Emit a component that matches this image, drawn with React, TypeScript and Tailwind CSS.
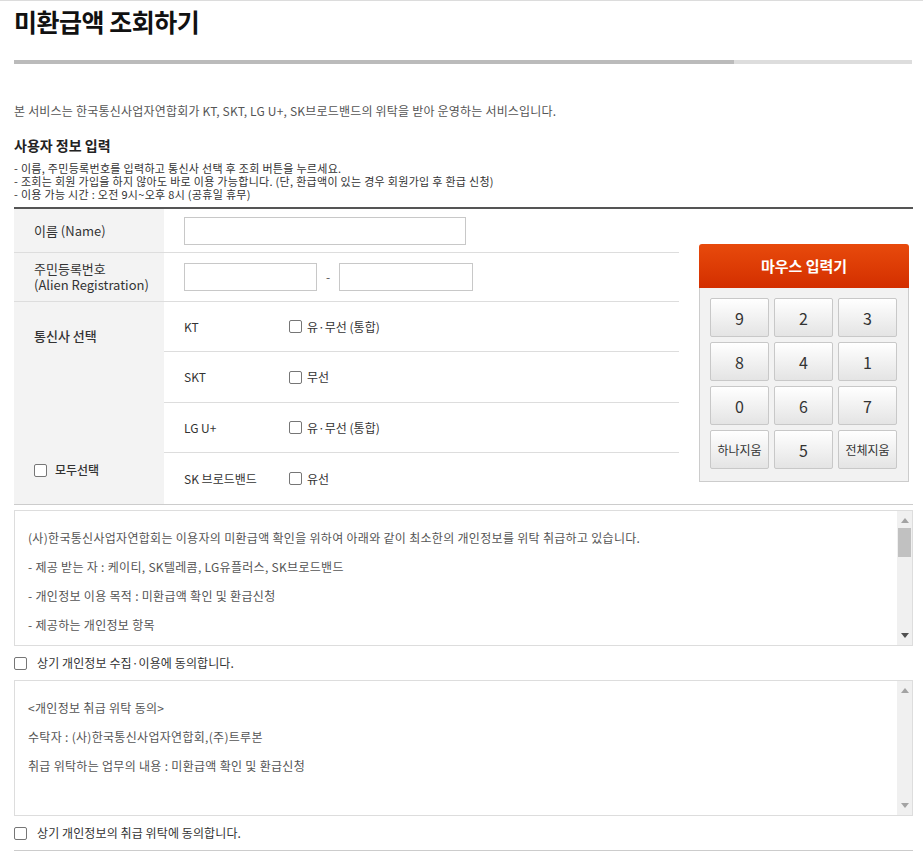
import React from "react";

const Check = ({ className = "" }: { className?: string }) => (
  <span
    className={`inline-block w-[13px] h-[13px] border border-[#767676] rounded-[2px] bg-white shrink-0 ${className}`}
  />
);

function ScrollBar({ active }: { active: boolean }) {
  return (
    <div className="w-[15px] bg-[#f0f0f0] flex flex-col items-center shrink-0">
      <svg width="8" height="5" viewBox="0 0 8 5" className="mt-[7px] shrink-0">
        <path d="M0 5 L4 0 L8 5Z" fill="#a3a3a3" />
      </svg>
      {active && <div className="mt-[5px] w-[13px] h-[29px] bg-[#c1c1c1] shrink-0" />}
      <div className="flex-1" />
      <svg width="8" height="5" viewBox="0 0 8 5" className="mb-[7px] shrink-0">
        <path d="M0 0 L8 0 L4 5Z" fill={active ? "#505050" : "#a3a3a3"} />
      </svg>
    </div>
  );
}

function KeyBtn({ label, small }: { label: string; small?: boolean }) {
  return (
    <div
      className={`w-[59px] h-[39px] flex items-center justify-center border border-[#c8c8c8] rounded-[2px] bg-gradient-to-b from-[#ffffff] to-[#e4e4e4] text-[#333] ${
        small ? "text-[12px]" : "text-[16px]"
      }`}
    >
      {label}
    </div>
  );
}

export default function App() {
  const carriers = [
    { name: "KT", opt: "유·무선 (통합)", h: "h-[50px] border-b border-[#dddddd]" },
    { name: "SKT", opt: "무선", h: "h-[51px] border-b border-[#dddddd]" },
    { name: "LG U+", opt: "유·무선 (통합)", h: "h-[50px] border-b border-[#dddddd]" },
    { name: "SK 브로드밴드", opt: "유선", h: "flex-1" },
  ];
  const keys = ["9", "2", "3", "8", "4", "1", "0", "6", "7", "하나지움", "5", "전체지움"];

  return (
    <div className="w-[923px] min-h-[861px] bg-white border-t border-[#dcdcdc] font-['Noto_Sans_CJK_KR','Noto_Sans',sans-serif] text-[#333]">
      <div className="ml-[14px] w-[899px]">
        <h1 className="pt-[2px] text-[25px] leading-[36px] font-bold text-[#111] tracking-[-0.5px]">
          미환급액 조회하기
        </h1>
        <div className="mt-[21px] flex h-[4px] w-[898px]">
          <div className="w-[720px] bg-[#bbbbbb]" />
          <div className="flex-1 bg-[#dddddd]" />
        </div>
        <p className="mt-[38px] text-[12px] leading-[18px] text-[#555] tracking-[0.2px]">
          본 서비스는 한국통신사업자연합회가 KT, SKT, LG U+, SK브로드밴드의 위탁을 받아 운영하는 서비스입니다.
        </p>
        <h2 className="mt-[15px] text-[14px] leading-[20px] font-bold text-[#222]">사용자 정보 입력</h2>
        <ul className="mt-[7px] text-[11px] leading-[13px] text-[#333] tracking-[0.3px]">
          <li>- 이름, 주민등록번호를 입력하고 통신사 선택 후 조회 버튼을 누르세요.</li>
          <li>- 조회는 회원 가입을 하지 않아도 바로 이용 가능합니다. (단, 환급액이 있는 경우 회원가입 후 환급 신청)</li>
          <li>- 이용 가능 시간 : 오전 9시~오후 8시 (공휴일 휴무)</li>
        </ul>

        <div className="mt-[6px] border-t-2 border-t-[#555555] border-b border-b-[#cccccc] flex">
          {/* table */}
          <div className="w-[665px] flex flex-col">
            <div className="h-[44px] flex border-b border-[#dddddd]">
              <div className="w-[150px] bg-[#f3f3f3] pl-[20px] flex items-center text-[13px] text-[#333]">
                이름 (Name)
              </div>
              <div className="flex-1 pl-[20px] flex items-center">
                <div className="w-[282px] h-[28px] border border-[#c8c8c8] bg-white" />
              </div>
            </div>
            <div className="h-[49px] flex border-b border-[#dddddd]">
              <div className="w-[150px] bg-[#f3f3f3] pl-[20px] flex flex-col justify-center text-[13px] leading-[16px] text-[#333]">
                <span>주민등록번호</span>
                <span>(Alien Registration)</span>
              </div>
              <div className="flex-1 pl-[20px] flex items-center">
                <div className="w-[133px] h-[28px] border border-[#c8c8c8] bg-white" />
                <span className="w-[22px] text-center text-[12px] text-[#555]">-</span>
                <div className="w-[134px] h-[28px] border border-[#c8c8c8] bg-white" />
              </div>
            </div>
            <div className="h-[202px] flex">
              <div className="w-[150px] bg-[#f3f3f3] pl-[20px] py-[24px] flex flex-col justify-between">
                <span className="text-[13px] leading-[20px] font-medium text-[#333]">통신사 선택</span>
                <span className="flex items-center text-[12px] leading-[20px] font-medium text-[#333]">
                  <Check className="mr-[8px]" />
                  모두선택
                </span>
              </div>
              <div className="flex-1 flex flex-col">
                {carriers.map((c) => (
                  <div key={c.name} className={`${c.h} flex items-center pl-[20px] text-[12px] text-[#333]`}>
                    <span className="w-[105px]">{c.name}</span>
                    <Check className="mr-[5px]" />
                    <span>{c.opt}</span>
                  </div>
                ))}
              </div>
            </div>
          </div>

          {/* keypad */}
          <div className="ml-[20px] mt-[35px] w-[210px] self-start">
            <div className="h-[44px] rounded-t-[3px] bg-gradient-to-b from-[#e84a0c] to-[#d32e00] flex items-center justify-center text-white font-bold text-[15px]">
              마우스 입력기
            </div>
            <div className="border border-t-0 border-[#cccccc] bg-[#f2f2f2] pl-[10px] pt-[10px] pb-[12px] grid grid-cols-[59px_59px_59px] gap-x-[5px] gap-y-[5px]">
              {keys.map((k) => (
                <KeyBtn key={k} label={k} small={k.length > 1} />
              ))}
            </div>
          </div>
        </div>

        {/* agreement box 1 */}
        <div className="mt-[5px] h-[136px] border border-[#dddddd] flex">
          <div className="flex-1 pl-[13px] pt-[12px] text-[12px] leading-[29px] text-[#555] tracking-[0.3px] overflow-hidden">
            <p>(사)한국통신사업자연합회는 이용자의 미환급액 확인을 위하여 아래와 같이 최소한의 개인정보를 위탁 취급하고 있습니다.</p>
            <p>- 제공 받는 자 : 케이티, SK텔레콤, LG유플러스, SK브로드밴드</p>
            <p>- 개인정보 이용 목적 : 미환급액 확인 및 환급신청</p>
            <p>- 제공하는 개인정보 항목</p>
          </div>
          <ScrollBar active />
        </div>
        <div className="h-[34px] flex items-center text-[12px] text-[#333] tracking-[0.1px]">
          <Check className="mr-[10px]" />
          상기 개인정보 수집·이용에 동의합니다.
        </div>

        {/* agreement box 2 */}
        <div className="h-[136px] border border-[#dddddd] flex">
          <div className="flex-1 pl-[13px] pt-[12px] text-[12px] leading-[29px] text-[#555] tracking-[0.3px] overflow-hidden">
            <p>&lt;개인정보 취급 위탁 동의&gt;</p>
            <p>수탁자 : (사)한국통신사업자연합회,(주)트루본</p>
            <p>취급 위탁하는 업무의 내용 : 미환급액 확인 및 환급신청</p>
          </div>
          <ScrollBar active={false} />
        </div>
        <div className="h-[35px] flex items-center border-b border-[#cccccc] text-[12px] text-[#333] tracking-[0.1px]">
          <Check className="mr-[10px]" />
          상기 개인정보의 취급 위탁에 동의합니다.
        </div>
      </div>
    </div>
  );
}
